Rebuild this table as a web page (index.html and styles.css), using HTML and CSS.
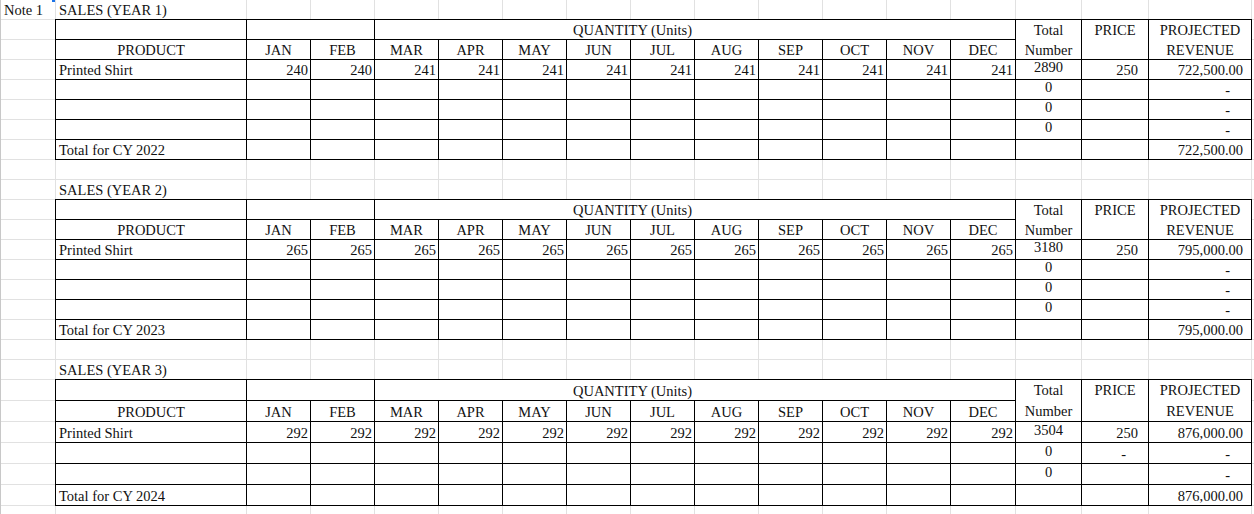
FILE: index.html
```html
<!DOCTYPE html>
<html>
<head>
<meta charset="utf-8">
<link rel="stylesheet" href="styles.css">
</head>
<body>
<div class="sheet">
  <span class="handle"></span>

  <!-- Title row Year 1 -->
  <div class="frow">
    <div class="fc">Note 1</div><div class="fc">SALES (YEAR 1)</div>
    <div class="fc"></div><div class="fc"></div><div class="fc"></div><div class="fc"></div><div class="fc"></div><div class="fc"></div><div class="fc"></div><div class="fc"></div><div class="fc"></div><div class="fc"></div><div class="fc"></div><div class="fc"></div><div class="fc"></div><div class="fc"></div><div class="fc"></div><div class="fc"></div>
  </div>

  <!-- Table Year 1 -->
  <div class="block">
    <div class="side"><div></div><div></div><div></div><div></div><div></div><div></div><div></div></div>
    <div class="tbl">
      <div class="c"></div><div class="c s2"></div><div class="c s10 qty">QUANTITY (Units)</div>
      <div class="c rs2 ctr two">Total<br>Number</div><div class="c rs2 ctr two">PRICE</div><div class="c rs2 ctr two">PROJECTED<br>REVENUE</div>
      <div class="c ctr">PRODUCT</div><div class="c ctr">JAN</div><div class="c ctr">FEB</div><div class="c ctr">MAR</div><div class="c ctr">APR</div><div class="c ctr">MAY</div><div class="c ctr">JUN</div><div class="c ctr">JUL</div><div class="c ctr">AUG</div><div class="c ctr">SEP</div><div class="c ctr">OCT</div><div class="c ctr">NOV</div><div class="c ctr">DEC</div>

      <div class="c">Printed Shirt</div><div class="c num">240</div><div class="c num">240</div><div class="c num">241</div><div class="c num">241</div><div class="c num">241</div><div class="c num">241</div><div class="c num">241</div><div class="c num">241</div><div class="c num">241</div><div class="c num">241</div><div class="c num">241</div><div class="c num">241</div><div class="c tot">2890</div><div class="c price">250</div><div class="c rev">722,500.00</div>

      <div class="c"></div><div class="c"></div><div class="c"></div><div class="c"></div><div class="c"></div><div class="c"></div><div class="c"></div><div class="c"></div><div class="c"></div><div class="c"></div><div class="c"></div><div class="c"></div><div class="c"></div><div class="c tot">0</div><div class="c"></div><div class="c dash">-</div>

      <div class="c"></div><div class="c"></div><div class="c"></div><div class="c"></div><div class="c"></div><div class="c"></div><div class="c"></div><div class="c"></div><div class="c"></div><div class="c"></div><div class="c"></div><div class="c"></div><div class="c"></div><div class="c tot">0</div><div class="c"></div><div class="c dash">-</div>

      <div class="c"></div><div class="c"></div><div class="c"></div><div class="c"></div><div class="c"></div><div class="c"></div><div class="c"></div><div class="c"></div><div class="c"></div><div class="c"></div><div class="c"></div><div class="c"></div><div class="c"></div><div class="c tot">0</div><div class="c"></div><div class="c dash">-</div>

      <div class="c">Total for CY 2022</div><div class="c"></div><div class="c"></div><div class="c"></div><div class="c"></div><div class="c"></div><div class="c"></div><div class="c"></div><div class="c"></div><div class="c"></div><div class="c"></div><div class="c"></div><div class="c"></div><div class="c"></div><div class="c"></div><div class="c rev">722,500.00</div>
    </div>
    <div class="side rest"><div></div><div></div><div></div><div></div><div></div><div></div><div></div></div>
  </div>

  <!-- spacer + title Year 2 -->
  <div class="frow lined">
    <div class="fc"></div><div class="fc"></div><div class="fc"></div><div class="fc"></div><div class="fc"></div><div class="fc"></div><div class="fc"></div><div class="fc"></div><div class="fc"></div><div class="fc"></div><div class="fc"></div><div class="fc"></div><div class="fc"></div><div class="fc"></div><div class="fc"></div><div class="fc"></div><div class="fc"></div><div class="fc"></div>
  </div>
  <div class="frow">
    <div class="fc"></div><div class="fc">SALES (YEAR 2)</div>
    <div class="fc"></div><div class="fc"></div><div class="fc"></div><div class="fc"></div><div class="fc"></div><div class="fc"></div><div class="fc"></div><div class="fc"></div><div class="fc"></div><div class="fc"></div><div class="fc"></div><div class="fc"></div><div class="fc"></div><div class="fc"></div><div class="fc"></div><div class="fc"></div>
  </div>

  <!-- Table Year 2 -->
  <div class="block">
    <div class="side"><div></div><div></div><div></div><div></div><div></div><div></div><div></div></div>
    <div class="tbl">
      <div class="c"></div><div class="c s2"></div><div class="c s10 qty">QUANTITY (Units)</div>
      <div class="c rs2 ctr two">Total<br>Number</div><div class="c rs2 ctr two">PRICE</div><div class="c rs2 ctr two">PROJECTED<br>REVENUE</div>
      <div class="c ctr">PRODUCT</div><div class="c ctr">JAN</div><div class="c ctr">FEB</div><div class="c ctr">MAR</div><div class="c ctr">APR</div><div class="c ctr">MAY</div><div class="c ctr">JUN</div><div class="c ctr">JUL</div><div class="c ctr">AUG</div><div class="c ctr">SEP</div><div class="c ctr">OCT</div><div class="c ctr">NOV</div><div class="c ctr">DEC</div>

      <div class="c">Printed Shirt</div><div class="c num">265</div><div class="c num">265</div><div class="c num">265</div><div class="c num">265</div><div class="c num">265</div><div class="c num">265</div><div class="c num">265</div><div class="c num">265</div><div class="c num">265</div><div class="c num">265</div><div class="c num">265</div><div class="c num">265</div><div class="c tot">3180</div><div class="c price">250</div><div class="c rev">795,000.00</div>

      <div class="c"></div><div class="c"></div><div class="c"></div><div class="c"></div><div class="c"></div><div class="c"></div><div class="c"></div><div class="c"></div><div class="c"></div><div class="c"></div><div class="c"></div><div class="c"></div><div class="c"></div><div class="c tot">0</div><div class="c"></div><div class="c dash">-</div>

      <div class="c"></div><div class="c"></div><div class="c"></div><div class="c"></div><div class="c"></div><div class="c"></div><div class="c"></div><div class="c"></div><div class="c"></div><div class="c"></div><div class="c"></div><div class="c"></div><div class="c"></div><div class="c tot">0</div><div class="c"></div><div class="c dash">-</div>

      <div class="c"></div><div class="c"></div><div class="c"></div><div class="c"></div><div class="c"></div><div class="c"></div><div class="c"></div><div class="c"></div><div class="c"></div><div class="c"></div><div class="c"></div><div class="c"></div><div class="c"></div><div class="c tot">0</div><div class="c"></div><div class="c dash">-</div>

      <div class="c">Total for CY 2023</div><div class="c"></div><div class="c"></div><div class="c"></div><div class="c"></div><div class="c"></div><div class="c"></div><div class="c"></div><div class="c"></div><div class="c"></div><div class="c"></div><div class="c"></div><div class="c"></div><div class="c"></div><div class="c"></div><div class="c rev">795,000.00</div>
    </div>
    <div class="side rest"><div></div><div></div><div></div><div></div><div></div><div></div><div></div></div>
  </div>

  <!-- spacer + title Year 3 -->
  <div class="frow lined">
    <div class="fc"></div><div class="fc"></div><div class="fc"></div><div class="fc"></div><div class="fc"></div><div class="fc"></div><div class="fc"></div><div class="fc"></div><div class="fc"></div><div class="fc"></div><div class="fc"></div><div class="fc"></div><div class="fc"></div><div class="fc"></div><div class="fc"></div><div class="fc"></div><div class="fc"></div><div class="fc"></div>
  </div>
  <div class="frow">
    <div class="fc"></div><div class="fc">SALES (YEAR 3)</div>
    <div class="fc"></div><div class="fc"></div><div class="fc"></div><div class="fc"></div><div class="fc"></div><div class="fc"></div><div class="fc"></div><div class="fc"></div><div class="fc"></div><div class="fc"></div><div class="fc"></div><div class="fc"></div><div class="fc"></div><div class="fc"></div><div class="fc"></div><div class="fc"></div>
  </div>

  <!-- Table Year 3 -->
  <div class="block tall">
    <div class="side"><div></div><div></div><div></div><div></div><div></div><div></div></div>
    <div class="tbl">
      <div class="c"></div><div class="c s2"></div><div class="c s10 qty">QUANTITY (Units)</div>
      <div class="c rs2 ctr two">Total<br>Number</div><div class="c rs2 ctr two">PRICE</div><div class="c rs2 ctr two">PROJECTED<br>REVENUE</div>
      <div class="c ctr">PRODUCT</div><div class="c ctr">JAN</div><div class="c ctr">FEB</div><div class="c ctr">MAR</div><div class="c ctr">APR</div><div class="c ctr">MAY</div><div class="c ctr">JUN</div><div class="c ctr">JUL</div><div class="c ctr">AUG</div><div class="c ctr">SEP</div><div class="c ctr">OCT</div><div class="c ctr">NOV</div><div class="c ctr">DEC</div>

      <div class="c">Printed Shirt</div><div class="c num">292</div><div class="c num">292</div><div class="c num">292</div><div class="c num">292</div><div class="c num">292</div><div class="c num">292</div><div class="c num">292</div><div class="c num">292</div><div class="c num">292</div><div class="c num">292</div><div class="c num">292</div><div class="c num">292</div><div class="c tot">3504</div><div class="c price">250</div><div class="c rev">876,000.00</div>

      <div class="c"></div><div class="c"></div><div class="c"></div><div class="c"></div><div class="c"></div><div class="c"></div><div class="c"></div><div class="c"></div><div class="c"></div><div class="c"></div><div class="c"></div><div class="c"></div><div class="c"></div><div class="c tot">0</div><div class="c pdash">-</div><div class="c dash">-</div>

      <div class="c"></div><div class="c"></div><div class="c"></div><div class="c"></div><div class="c"></div><div class="c"></div><div class="c"></div><div class="c"></div><div class="c"></div><div class="c"></div><div class="c"></div><div class="c"></div><div class="c"></div><div class="c tot">0</div><div class="c"></div><div class="c dash">-</div>

      <div class="c">Total for CY 2024</div><div class="c"></div><div class="c"></div><div class="c"></div><div class="c"></div><div class="c"></div><div class="c"></div><div class="c"></div><div class="c"></div><div class="c"></div><div class="c"></div><div class="c"></div><div class="c"></div><div class="c"></div><div class="c"></div><div class="c rev">876,000.00</div>
    </div>
    <div class="side rest"><div></div><div></div><div></div><div></div><div></div><div></div></div>
  </div>

  <div class="frow lined">
    <div class="fc"></div><div class="fc"></div><div class="fc"></div><div class="fc"></div><div class="fc"></div><div class="fc"></div><div class="fc"></div><div class="fc"></div><div class="fc"></div><div class="fc"></div><div class="fc"></div><div class="fc"></div><div class="fc"></div><div class="fc"></div><div class="fc"></div><div class="fc"></div><div class="fc"></div><div class="fc"></div>
  </div>
</div>
</body>
</html>
```

FILE: styles.css
```css
* { box-sizing: content-box; }

html, body {
  margin: 0;
  padding: 0;
  background: #ffffff;
  overflow: hidden;
}

body {
  font-family: "Liberation Serif", "Times New Roman", serif;
  font-size: 14.5px;
  color: #111111;
}

.sheet {
  position: relative;
  width: 1253px;
  border-left: 1px solid #c8c8c8;
  display: flex;
  flex-direction: column;
}

.handle {
  position: absolute;
  left: 51px;
  top: 0;
  width: 3px;
  height: 2px;
  background: #1a73e8;
}

/* free (gridline-only) rows */
.frow {
  display: grid;
  grid-template-columns: 54px 190px repeat(11, 63px) 64px 65px 66px 102px 2px;
  column-gap: 1px;
  background: #e1e1e1;
  height: 19px;
}

.frow.lined {
  border-bottom: 1px solid #e1e1e1;
}

.fc {
  background: #ffffff;
  white-space: nowrap;
  line-height: 21px;
  padding-left: 3px;
  overflow: visible;
}

/* table blocks */
.block {
  display: flex;
}

.side {
  width: 54px;
  display: grid;
  grid-auto-rows: 19px;
  row-gap: 1px;
  background: #e1e1e1;
  border-top: 1px solid #e1e1e1;
  border-bottom: 1px solid #e1e1e1;
}

.side > div {
  background: #ffffff;
}

.side.rest {
  width: 2px;
}

.block.tall .side {
  grid-auto-rows: 20px;
}

.tbl {
  display: grid;
  grid-template-columns: 190px repeat(11, 63px) 64px 65px 66px 102px;
  grid-auto-rows: 19px;
  gap: 1px;
  background: #000000;
  border: 1px solid #000000;
}

.block.tall .tbl {
  grid-auto-rows: 20px;
}

.c {
  background: #ffffff;
  white-space: nowrap;
  line-height: 21px;
  padding: 0 3px;
  overflow: visible;
}

.block.tall .c {
  line-height: 22px;
}

.s2 { grid-column: span 2; }
.s10 { grid-column: span 10; }
.rs2 { grid-row: span 2; }

.ctr { text-align: center; }

.two {
  line-height: 20px;
}

.block.tall .two {
  line-height: 21px;
}

.qty {
  text-align: center;
  padding-right: 128px;
}

.num {
  text-align: right;
  padding-right: 2px;
}

.tot {
  text-align: center;
  line-height: 15px;
}

.block.tall .tot {
  line-height: 16px;
}

.price {
  text-align: right;
  padding-right: 10px;
}

.pdash {
  text-align: right;
  padding-right: 22px;
}

.rev {
  text-align: right;
  padding-right: 8px;
}

.dash {
  text-align: right;
  padding-right: 21px;
}
```
